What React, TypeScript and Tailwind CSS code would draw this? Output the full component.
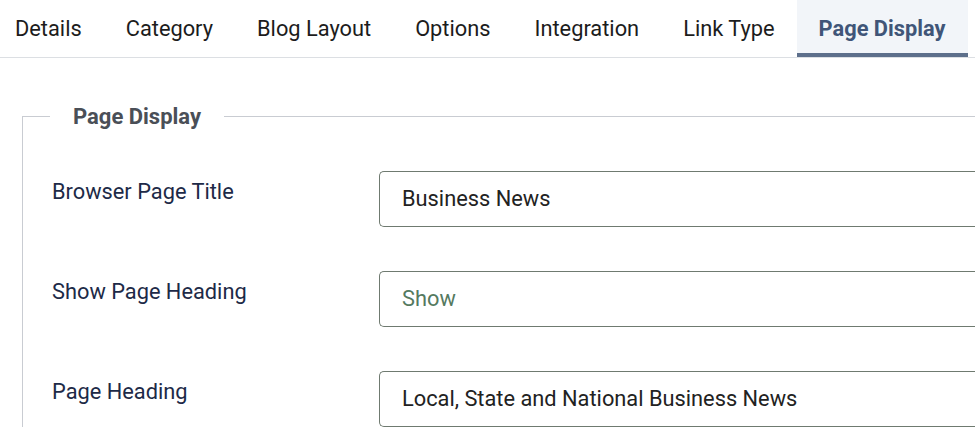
const tabs = ['Details', 'Category', 'Blog Layout', 'Options', 'Integration', 'Link Type', 'Page Display'];

const fields = [
  { label: 'Browser Page Title', value: 'Business News' },
  { label: 'Show Page Heading', value: 'Show', muted: true },
  { label: 'Page Heading', value: 'Local, State and National Business News' },
];

export default function App() {
  const active = 'Page Display';

  return (
    <div className="w-[975px] h-[436px] overflow-hidden bg-white font-['Roboto','Liberation_Sans',sans-serif]">
      <div className="flex h-[58px] border-b border-[#dcdfe3] ml-[-7px]">
        {tabs.map((tab) => (
          <div
            key={tab}
            className={`flex items-center px-[22px] pt-[6px] text-[21.8px] border-b-[4px] ${
              tab === active
                ? 'bg-[#f2f5f9] border-[#5d6f8b] text-[#405578] font-bold'
                : 'border-transparent text-[#1c1c1c]'
            }`}
          >
            {tab}
          </div>
        ))}
      </div>

      <fieldset className="ml-[22px] mt-[42px] border-l border-t border-[#c9ccd2] pl-[29px] pt-[38px] min-w-0">
        <legend className="ml-[-2px] px-[23px] text-[22px] font-bold text-[#4a4f57]">Page Display</legend>
        <div className="flex flex-col gap-[44px]">
          {fields.map((f) => (
            <div key={f.label} className="flex items-start">
              <div className="w-[327px] pt-[5px] text-[21.8px] text-[#1d2a47]">{f.label}</div>
              <div
                className={`flex-1 h-[56px] flex items-center pl-[22px] border border-[#6f7a70] rounded-l-[5px] border-r-0 text-[21.8px] ${
                  f.muted ? 'text-[#557a5f]' : 'text-[#222]'
                }`}
              >
                {f.value}
              </div>
            </div>
          ))}
        </div>
      </fieldset>
    </div>
  );
}
